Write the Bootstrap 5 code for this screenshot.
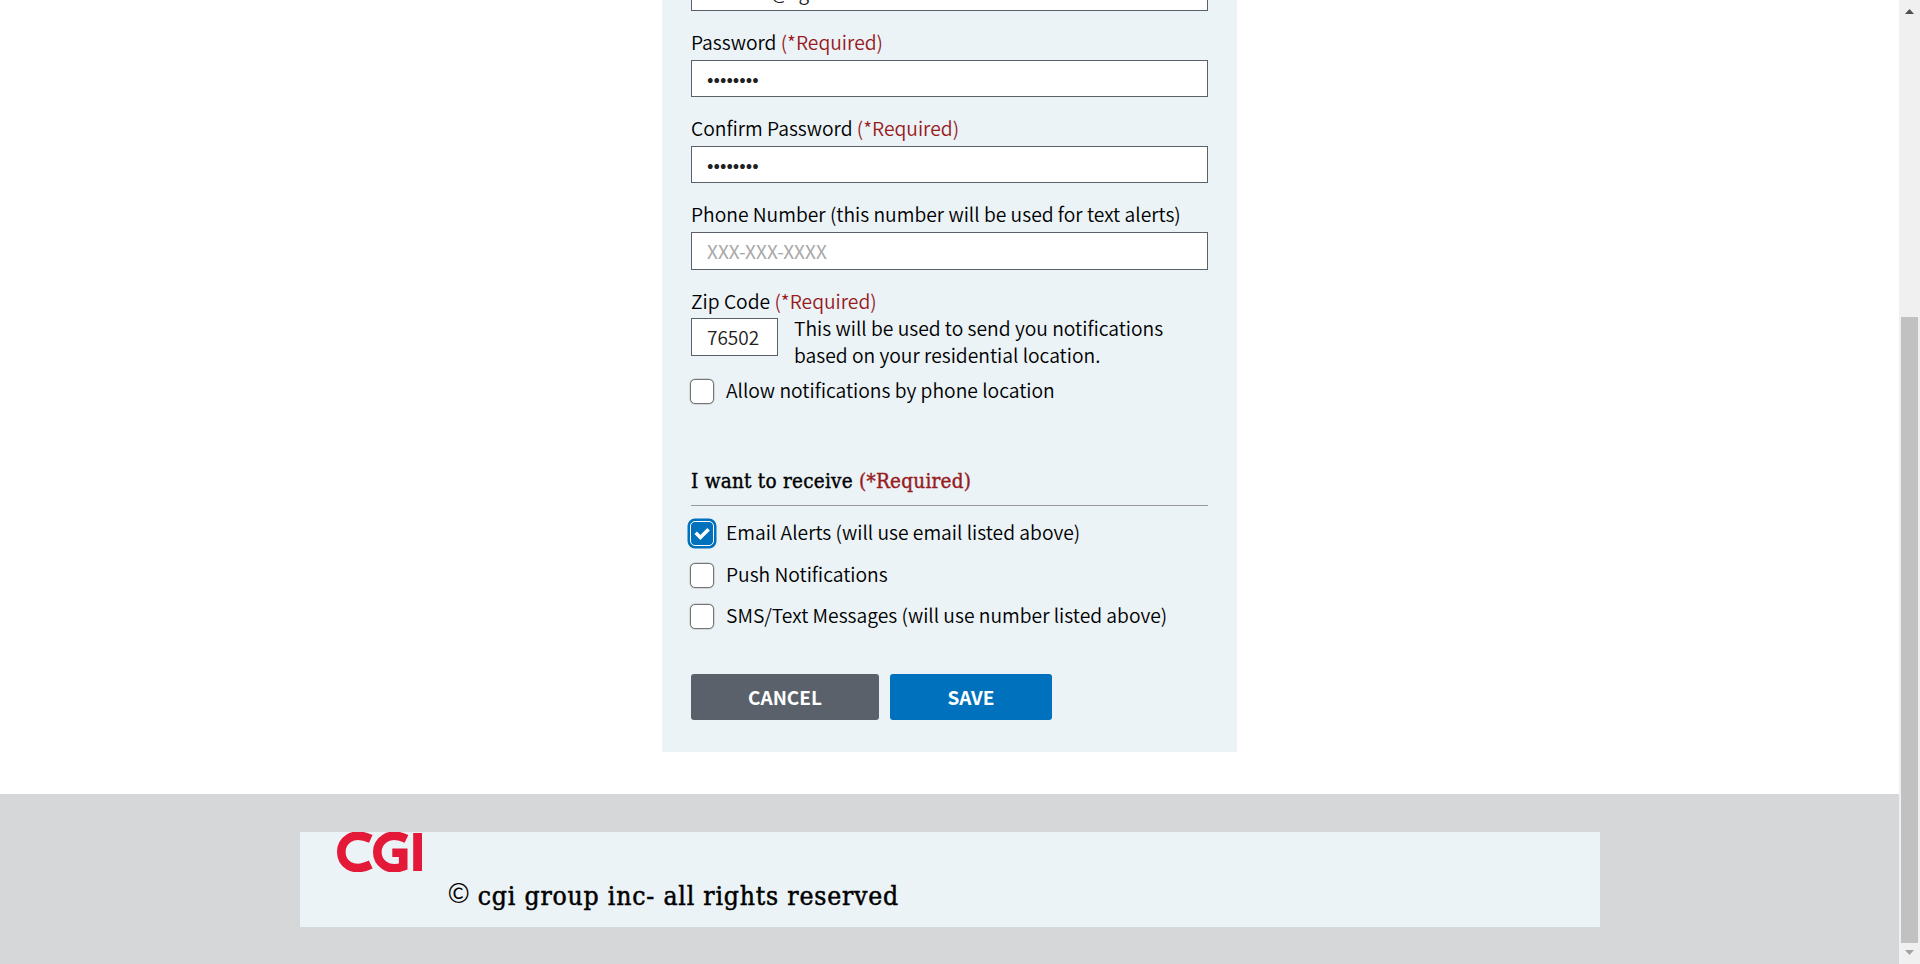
<!DOCTYPE html>
<html lang="en">
<head>
<meta charset="utf-8">
<meta name="viewport" content="width=device-width, initial-scale=1">
<title>Profile</title>
<link href="https://cdn.jsdelivr.net/npm/bootstrap@5.3.0/dist/css/bootstrap.min.css" rel="stylesheet">
<style>
body{font-family:"Noto Sans CJK JP","Open Sans",sans-serif;font-size:19.27px;line-height:27px;color:#000;background:#fff;font-weight:350}
.page-main{flex:1 1 0;min-height:0;padding-bottom:42px}
.panel{width:575px;background:#ebf3f7;padding:0 29px 32px}
.w-text{display:inline-block;white-space:nowrap}
.req{color:#981b1e}
.lbl{height:49px;padding-top:16px;line-height:30px;display:block;white-space:nowrap}
.inp{height:37px;border:1px solid #5b616b;border-radius:0;padding:0 15px 2px;background:#fff;color:#212121;font-size:19px;line-height:33px;width:100%;display:block;outline:0}
.inp::placeholder{color:#a9a9a9;opacity:1}
.tall{height:38px}
.l48{height:48px}
.zip{width:87px;flex:none;font-weight:350}
.mail{font-weight:350}
.help{margin-top:-3px}
.chk{appearance:none;width:24px;height:25px;border:1px solid #757575;border-radius:5px;background:#fff;margin:0 0 0 -1px;flex:none;box-shadow:0 0 0 .5px #9999}
.chk:checked{background:#0071bc url("data:image/svg+xml,%3Csvg xmlns='http://www.w3.org/2000/svg' viewBox='0 0 22 23'%3E%3Cpath d='M4.700 10.800l4.700 4.700 8.200-8.200' fill='none' stroke='white' stroke-width='3.6'/%3E%3C/svg%3E") center/22px 23px no-repeat;border-color:#fff;box-shadow:0 0 0 2.5px #0071bc}
.opt{height:25px;gap:12px;white-space:nowrap;line-height:25px}
.opt span{padding-bottom:2px}
.serif{font-family:"DejaVu Serif Condensed","DejaVu Serif",serif}
.head{font-size:20.5px;letter-spacing:.25px;line-height:30px;margin:62px 0 0;height:39px;border-bottom:1px solid #999;box-sizing:content-box;white-space:nowrap;font-weight:400;-webkit-text-stroke:.4px}
.act{height:46px;border-radius:3px;border:0;padding:0 0 1px;color:#fff;font-weight:700;font-size:19px;line-height:44px}
.cancel{width:188px;background:#5b616b}
.save{width:162px;background:#0071bc}
.foot{height:170px;background:#d6d7d9;padding-top:38px}
.foot-in{width:1300px;height:95px;background:#ebf3f7;padding-left:37px}
.copy{font-size:26.3px;letter-spacing:.8px;line-height:36px;margin:46px 0 0 26px;white-space:nowrap;-webkit-text-stroke:.5px}
.csym{font-family:"Noto Sans CJK JP",sans-serif;font-size:27px;line-height:1;display:inline-block;height:30px;vertical-align:top;width:22px;letter-spacing:0;-webkit-text-stroke:0}
.sbar{width:21px;background:#f0f0f0;padding:9px 0}
.thumb{width:17px;height:626px;background:#c1c1c1}
</style>
</head>
<body class="vh-100 overflow-hidden d-flex">
<div class="flex-grow-1 d-flex flex-column vh-100">
<main class="page-main overflow-hidden d-flex flex-column justify-content-end align-items-center">
<form class="panel flex-shrink-0">
<input class="inp mail" type="text" value="anneke@cgi.com" aria-label="Email">
<label class="lbl" for="p1"><span class="w-text">Password <span class="req">(*Required)</span></span></label>
<input class="inp" id="p1" type="password" value="password">
<label class="lbl" for="p2"><span class="w-text">Confirm Password <span class="req">(*Required)</span></span></label>
<input class="inp" id="p2" type="password" value="password">
<label class="lbl" for="ph"><span class="w-text">Phone Number (this number will be used for text alerts)</span></label>
<input class="inp tall" id="ph" type="text" placeholder="XXX-XXX-XXXX">
<label class="lbl l48" for="zp"><span class="w-text">Zip Code <span class="req">(*Required)</span></span></label>
<div class="d-flex" style="height:61px">
<input class="inp tall zip" id="zp" type="text" value="76502">
<div class="ms-3 text-nowrap help">This will be used to send you notifications<br>based on your residential location.</div>
</div>
<label class="opt d-flex align-items-center"><input class="chk" type="checkbox"><span>Allow notifications by phone location</span></label>
<h2 class="head serif">I want to receive <span class="req">(*Required)</span></h2>
<div class="d-flex flex-column" style="margin-top:15px;gap:16.500px">
<label class="opt d-flex align-items-center"><input class="chk" type="checkbox" checked><span>Email Alerts (will use email listed above)</span></label>
<label class="opt d-flex align-items-center"><input class="chk" type="checkbox"><span>Push Notifications</span></label>
<label class="opt d-flex align-items-center"><input class="chk" type="checkbox"><span>SMS/Text Messages (will use number listed above)</span></label>
</div>
<div class="d-flex" style="margin-top:45px;gap:11px">
<button type="button" class="act cancel">CANCEL</button>
<button type="button" class="act save">SAVE</button>
</div>
</form>
</main>
<footer class="foot flex-shrink-0">
<div class="foot-in mx-auto d-flex align-items-start">
<svg width="85" height="40" viewBox="0 0 85 40" role="img" aria-label="CGI" fill="none" stroke="#e31937"><path d="M33.800 6.900C14 -2 4.300 10 4.300 20S14 42 33.800 32.500" stroke-width="8.600"/><path d="M69.500 6.900C51 -2 40.300 10 40.300 20S50 40.500 66.200 34.500V20.500M55.300 20.700H70.500" stroke-width="8.600"/><path d="M80.600 1V39" stroke-width="8.800"/></svg>
<div class="copy serif"><span class="csym">©</span> cgi group inc- all rights reserved</div>
</div>
</footer>
</div>
<aside class="sbar vh-100 d-flex flex-column align-items-center flex-shrink-0">
<svg width="9" height="5"><path d="M0 5L4.500 0L9 5z" fill="#505050"/></svg>
<div class="thumb" style="margin-top:303px"></div>
<svg width="9" height="5" style="margin-top:7px"><path d="M0 0L4.500 5L9 0z" fill="#a3a3a3"/></svg>
</aside>
<script src="https://cdn.jsdelivr.net/npm/bootstrap@5.3.0/dist/js/bootstrap.bundle.min.js"></script>
</body>
</html>
